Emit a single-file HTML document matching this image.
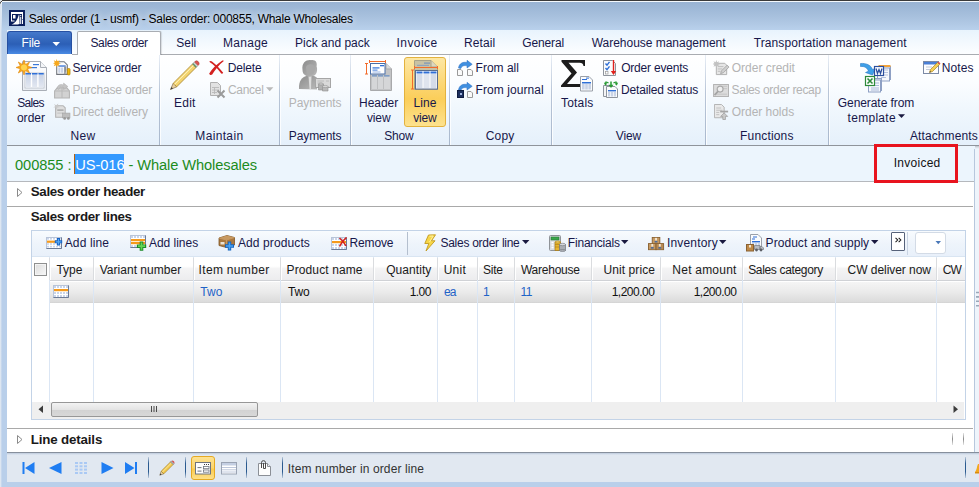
<!DOCTYPE html>
<html lang="en"><head><meta charset="utf-8"><title>Sales order</title>
<style>
html,body{margin:0;padding:0;background:#fff;}
body{width:979px;height:487px;overflow:hidden;font-family:"Liberation Sans",sans-serif;font-size:12px;}
#win{position:relative;width:979px;height:487px;overflow:hidden;background:#fff;}
#win div,#win span,#win svg{position:absolute;box-sizing:border-box;}
#win .t{white-space:nowrap;line-height:12px;font-size:12px;}
#win .t span.sel{position:static;background:#3399ff;color:#fff;padding:3px 0 1px 0;box-shadow:-1px 0 0 #b8620c;}
/* window chrome */
#frame{left:0;top:0;width:979px;height:487px;background:#b9cfea;}
#titlebar{left:0;top:0;width:979px;height:31px;background:linear-gradient(#97b1d1 0px,#9eb8d7 8px,#a7c0dd 16px,#b1c9e5 24px,#bad2ed 31px);}
#topline{left:0;top:0;width:979px;height:1px;background:#3a3a3a;}
#topline2{left:1px;top:1px;width:978px;height:1px;background:#f4f8fc;}
#leftline{left:0;top:1px;width:1px;height:486px;background:linear-gradient(#555 0,#555 2px,#dde6f1 3px,#dde6f1 100%);}
#leftline2{left:1px;top:2px;width:1px;height:485px;background:linear-gradient(#e8eff8,#c8d8ec 30px,#c6d7ed);}
#tabrow{left:7px;top:30px;width:972px;height:25px;background:linear-gradient(#e8f3fd 0,#f3f9fe 50%,#fdfeff 100%);}
#tabline{left:72px;top:54px;width:907px;height:1px;background:#a9acb1;}
#filebtn{left:7px;top:30px;width:65px;height:24px;background:transparent;border-radius:3px 3px 0 0;}
#filebtn i{position:absolute;left:0;top:1px;right:0;bottom:0;border-radius:3px 3px 0 0;background:linear-gradient(#4579cb 0,#3468bd 35%,#2c5fb6 55%,#3873cf 80%,#4a8be3 100%);border:1px solid #2650a2;border-bottom:none;}
#seltab{left:77px;top:31px;width:84px;height:24px;background:#fff;border:1px solid #a9adb3;border-bottom:none;border-radius:2px 2px 0 0;box-shadow:1px 0 1px rgba(0,0,0,.12);}
#ribbon{left:7px;top:55px;width:972px;height:90px;background:linear-gradient(#ffffff 0,#fbfdff 30%,#f0f7fd 60%,#e5f0fb 100%);}
#ribbonline{left:7px;top:145px;width:972px;height:1px;background:#8f949b;}
#ribbonshadow{left:7px;top:146px;width:972px;height:3px;background:linear-gradient(#bcc1c8,#dde3ea 55%,#ecf5fd);}
.gsep{top:55px;width:1px;height:90px;background:linear-gradient(#e8eef6,#b9c6d8 40%,#a9b8cd);}
.gsep2{top:55px;width:1px;height:90px;background:rgba(255,255,255,.8);}
#lineview{left:404px;top:57px;width:42px;height:70px;border:1px solid #e3b23e;border-radius:3px;background:linear-gradient(#fde7a4 0,#fcd878 35%,#fbce5a 60%,#fde28e 100%);}
/* caption */
#caption{left:7px;top:146px;width:968px;height:36px;background:#ecf5fd;}
#capline{left:7px;top:181px;width:968px;height:1px;background:#b5b8bd;}
#content{left:7px;top:182px;width:968px;height:270px;background:#fff;}
#rightstrip{left:974px;top:149px;width:5px;height:303px;background:#eef4fb;border-left:1px solid #b7c7dd;}
.hline{left:7px;width:966px;height:1px;background:#a9a9a9;}
#redbox{left:874px;top:144px;width:84px;height:39px;border:3px solid #e8131e;background:#ecf5fd;}
/* grid */
#gridbox{left:31px;top:230px;width:935px;height:190px;border:1px solid #c3d3e7;background:#fff;}
#toolbar{left:32px;top:231px;width:933px;height:26px;background:linear-gradient(#f8fbfe,#eef4fb 50%,#e8f0fa);}
#hdr{left:49px;top:257px;width:916px;height:24px;background:linear-gradient(#ffffff 0,#ffffff 40%,#f4f4f5 50%,#ececee 100%);border-bottom:1px solid #d0d2d6;}
#row1{left:49px;top:282px;width:916px;height:21px;background:linear-gradient(#f5f5f5 0,#eaeaea 50%,#dbdbdb 95%,#d0d0d0 100%);}
.csep{top:257px;width:1px;height:145px;background:#dbe6f4;}
.hsep{top:258px;width:2px;height:22px;background:linear-gradient(90deg,#dadcdf 50%,#fff 50%);}
#chk{left:34px;top:263px;width:13px;height:13px;border:1px solid #8e8f8f;background:linear-gradient(135deg,#dcdcdc,#f8f8f8);box-shadow:inset 0 0 0 1px #f4f4f4;}
#hscroll{left:32px;top:402px;width:932px;height:17px;background:#efefef;}
#thumb{left:51px;top:402px;width:207px;height:15px;border:1px solid #979797;border-radius:2px;background:linear-gradient(#f3f3f3 0,#e4e4e4 50%,#d2d2d2 51%,#d8d8d8 100%);}
/* status */
#statusline{left:7px;top:452px;width:972px;height:1px;background:#868f9c;}
#status{left:7px;top:453px;width:972px;height:29px;background:linear-gradient(#b9c6d9 0,#d3ddea 1px,#e1e8f1 2.5px,#e1e8f1 100%);}
#bottomband{left:2px;top:482px;width:977px;height:5px;background:#b9cfea;}
.ssep{top:457px;width:1px;height:21px;background:linear-gradient(rgba(40,80,130,.2),#2a5a90 30%,#2a5a90 70%,rgba(40,80,130,.2));}
#sbtn{left:191px;top:456px;width:24px;height:24px;border:1px solid #e5a922;border-radius:3px;background:linear-gradient(#fde293,#fcd56c 50%,#fbcb4f 55%,#fde08a);}

#tbline{left:32px;top:256px;width:933px;height:1px;background:#d9e5f2;}
#t0{text-shadow:0 0 6px rgba(255,255,255,.75),0 0 10px rgba(255,255,255,.5);}

</style></head>
<body>
<div id="win">
<div id="frame"></div>
<div id="titlebar"></div>
<div id="topline"></div><div id="topline2"></div>
<div id="leftline"></div><div id="leftline2"></div>
<div id="corner" style="left:0;top:0;width:2px;height:1px;background:#dfe3e8"></div><div style="left:0;top:1px;width:1px;height:1px;background:#cdd2d8"></div><div style="left:1px;top:1px;width:1px;height:1px;background:#4a4a4a"></div><div style="left:1px;top:2px;width:1px;height:2px;background:#f0f5fa"></div>
<svg id="ticon" style="left:9px;top:10px" width="16" height="16" viewBox="0 0 16 16"><rect width="16" height="16" fill="#0a1f5c"/><path d="M2 2 H14 V9 H13 V4 H3 V10.500 H5.500 V11.500 H2 Z" fill="#fff"/><rect x="4" y="5" width="2.500" height="3.500" fill="#fff"/><path d="M2.500 14.500 C6 13.500 8.500 10 9.800 4.800 L10.300 4.800 L10.600 14 L8.500 14.500 Z" fill="#fff"/><rect x="11.200" y="7" width="1" height="7" fill="#fff"/><rect x="11.200" y="5" width="1" height="1.200" fill="#fff"/><rect x="13" y="9.500" width="1" height="4.500" fill="#fff"/></svg>
<div id="tabrow"></div>
<div id="tabline"></div>
<div id="filebtn"><i></i></div>
<svg style="left:52px;top:42px" width="9" height="5" viewBox="0 0 9 5"><path d="M0.5 0 L8 0 L4.25 4 Z" fill="#fff"/></svg>
<div id="seltab"></div>
<div id="ribbon"></div>
<div id="ribbonline"></div>
<div id="ribbonshadow"></div>
<div class="gsep" style="left:159px"></div><div class="gsep2" style="left:160px"></div>
<div class="gsep" style="left:279px"></div><div class="gsep2" style="left:280px"></div>
<div class="gsep" style="left:350px"></div><div class="gsep2" style="left:351px"></div>
<div class="gsep" style="left:449px"></div><div class="gsep2" style="left:450px"></div>
<div class="gsep" style="left:551px"></div><div class="gsep2" style="left:552px"></div>
<div class="gsep" style="left:705px"></div><div class="gsep2" style="left:706px"></div>
<div class="gsep" style="left:828px"></div><div class="gsep2" style="left:829px"></div>
<div id="lineview"></div>
<div id="caption"></div>
<div id="capline"></div>
<div id="content"></div>
<div id="rightstrip"></div>
<div id="redbox"></div>
<svg style="left:17px;top:188px" width="6" height="9" viewBox="0 0 6 9"><path d="M0.5 0.5 L5 4.5 L0.5 8.5 Z" fill="#fff" stroke="#8a8a8a" stroke-width="1"/></svg>
<div class="hline" style="top:206px"></div>
<svg style="left:17px;top:435px" width="6" height="9" viewBox="0 0 6 9"><path d="M0.5 0.5 L5 4.5 L0.5 8.5 Z" fill="#fff" stroke="#8a8a8a" stroke-width="1"/></svg>
<div class="hline" style="top:428px"></div>
<div id="gridbox"></div>
<div id="toolbar"></div>
<div id="tbline"></div>
<div id="hdr"></div>
<div id="row1"></div>
<div id="chk"></div>
<div id="hscroll"></div>
<div id="thumb"></div>
<div class="csep" style="left:49px"></div><div class="hsep" style="left:49px"></div>
<div class="csep" style="left:93px"></div><div class="hsep" style="left:93px"></div>
<div class="csep" style="left:193px"></div><div class="hsep" style="left:193px"></div>
<div class="csep" style="left:280px"></div><div class="hsep" style="left:280px"></div>
<div class="csep" style="left:373px"></div><div class="hsep" style="left:373px"></div>
<div class="csep" style="left:437px"></div><div class="hsep" style="left:437px"></div>
<div class="csep" style="left:477px"></div><div class="hsep" style="left:477px"></div>
<div class="csep" style="left:514px"></div><div class="hsep" style="left:514px"></div>
<div class="csep" style="left:591px"></div><div class="hsep" style="left:591px"></div>
<div class="csep" style="left:660px"></div><div class="hsep" style="left:660px"></div>
<div class="csep" style="left:742px"></div><div class="hsep" style="left:742px"></div>
<div class="csep" style="left:835px"></div><div class="hsep" style="left:835px"></div>
<div class="csep" style="left:936px"></div><div class="hsep" style="left:936px"></div>

<div id="statusline"></div>
<div id="status"></div>
<div id="bottomband"></div>
<div id="sbtn"></div>
<div class="ssep" style="left:148px"></div>
<div class="ssep" style="left:185px"></div>
<div class="ssep" style="left:246px"></div>
<div class="ssep" style="left:282px"></div>
<div class="ssep" style="left:965px"></div>

<!-- icons -->
<!-- Sales order big icon -->
<svg style="left:15px;top:59px" width="34" height="33" viewBox="0 0 34 33">
<defs><linearGradient id="pg" x1="0" y1="0" x2="0" y2="1"><stop offset="0" stop-color="#ffffff"/><stop offset="1" stop-color="#e9edf3"/></linearGradient>
<linearGradient id="colg" x1="0" y1="0" x2="0" y2="1"><stop offset="0" stop-color="#c9d3e6"/><stop offset="1" stop-color="#e3e8f1"/></linearGradient></defs>
<path d="M7.5 2.5 H25.5 L31.5 8.5 V31.5 H7.5 Z" fill="url(#pg)" stroke="#a9aeb6" stroke-width="1"/>
<path d="M25.5 2.5 V8.5 H31.5" fill="#f3f5f8" stroke="#a9aeb6" stroke-width="1"/>
<rect x="18" y="5" width="6" height="1.2" fill="#3b78d8"/><rect x="15" y="8" width="7" height="1.2" fill="#3b78d8"/>
<rect x="10" y="14" width="19" height="15" fill="#fff" stroke="#b7bdc8" stroke-width="0.8"/>
<rect x="10.5" y="14" width="5.5" height="1.6" fill="#2f6fd6"/><rect x="17" y="14" width="5.5" height="1.6" fill="#2f6fd6"/><rect x="23.5" y="14" width="5.2" height="1.6" fill="#2f6fd6"/>
<rect x="10.8" y="16" width="5" height="12.5" fill="url(#colg)"/><rect x="17.2" y="16" width="5" height="12.5" fill="url(#colg)"/><rect x="23.6" y="16" width="5" height="12.5" fill="url(#colg)"/>
<path d="M9 1 L10.5 5.5 L14.5 3 L12.6 7 L17 8.5 L12.6 9.8 L14.5 14 L10.3 11.6 L9 16 L7.5 11.6 L3.3 14 L5.3 9.8 L1 8.5 L5.3 7 L3.3 3 L7.5 5.5 Z" fill="#f7a81b" stroke="#e38a0c" stroke-width="0.6"/>
<circle cx="9" cy="8.5" r="3" fill="#ffd34d"/>
</svg>
<!-- Service order -->
<svg style="left:53px;top:59px" width="18" height="17" viewBox="0 0 17 16">
<path d="M3.5 2.5 H10.5 L13.5 5.5 V14.5 H3.5 Z" fill="#fbfcfd" stroke="#6f747c"/>
<rect x="5" y="6" width="7" height="1.2" fill="#2f6fd6"/><rect x="5" y="8" width="2" height="5" fill="#c9d3e6"/><rect x="7.6" y="8" width="2" height="5" fill="#c9d3e6"/>
<path d="M3.5 0 L4.2 2.2 L6.3 1.2 L5.3 3.3 L7.5 4 L5.3 4.7 L6.3 6.8 L4.2 5.8 L3.5 8 L2.8 5.8 L0.7 6.8 L1.7 4.7 L0 4 L1.7 3.3 L0.7 1.2 L2.8 2.2 Z" fill="#f7a81b"/>
<path d="M10.5 7 L12.5 7 L12.5 10 L11.8 14.5 L10.6 14.5 L10.5 10 Z" fill="#8a8f98"/>
<rect x="13.5" y="9" width="2.6" height="6" rx="0.8" fill="#f2b705" stroke="#a67800" stroke-width="0.6"/>
</svg>
<!-- Purchase order (disabled) -->
<svg style="left:53px;top:82px" width="18" height="17" viewBox="0 0 17 16">
<path d="M1.5 8.5 L4 5.5 H13 L15.5 8.5 V15 H1.5 Z" fill="#d2d2d2" stroke="#b3b3b3"/>
<path d="M1.5 8.5 H15.5 M8.5 5.5 V15" stroke="#b9b9b9" fill="none"/>
<path d="M4 6 C4 2.5 8 1.5 10 3 L10 1 L14 4.2 L10 7 L10 5 C8 4 6 4.5 5.5 7 Z" fill="#c4c4c4" stroke="#adadad" stroke-width="0.5"/>
</svg>
<!-- Direct delivery (disabled) -->
<svg style="left:53px;top:103px" width="18" height="17" viewBox="0 0 17 16">
<path d="M2.5 2.5 H9.5 L11.5 4.5 V13.5 H2.5 Z" fill="#dedede" stroke="#b3b3b3"/>
<rect x="4" y="6" width="6" height="1.4" fill="#a9a9a9"/><rect x="4" y="9" width="6" height="1" fill="#c3c3c3"/>
<path d="M1 1 L3 2 L5 0.5 L4.5 3 L6.5 4 L4.2 4.3 L3.5 6.5 L2.6 4.3 L0.3 4 L2.2 3 Z" fill="#c9c9c9"/>
<rect x="9" y="9.5" width="7" height="4.5" fill="#bdbdbd" stroke="#a4a4a4" stroke-width="0.6"/>
<circle cx="11" cy="14.5" r="1.3" fill="#9a9a9a"/><circle cx="14.5" cy="14.5" r="1.3" fill="#9a9a9a"/>
</svg>
<!-- Edit pencil -->
<svg style="left:169px;top:59px" width="32" height="32" viewBox="0 0 32 32">
<defs><linearGradient id="pen" x1="0" y1="0" x2="1" y2="1"><stop offset="0" stop-color="#fdf0bd"/><stop offset="0.5" stop-color="#f4d672"/><stop offset="1" stop-color="#d8a83a"/></linearGradient></defs>
<path d="M1.500 30.500 L4.200 24.300 L7.700 27.800 Z" fill="#e8cfa0" stroke="#8b7a55" stroke-width="0.800"/>
<path d="M1.500 30.500 L2.500 28 L4 29.500 Z" fill="#3a3a3a"/>
<path d="M4.200 24.300 L23.500 5 L27 8.500 L7.700 27.800 Z" fill="url(#pen)" stroke="#a8842c" stroke-width="0.800"/>
<path d="M5.600 25.400 L24.700 6.300" stroke="#fdf0b8" stroke-width="1" fill="none"/>
<path d="M23.500 5 L25 3.500 L28.500 7 L27 8.500 Z" fill="#4f9a5c" stroke="#6b6b6b" stroke-width="0.500"/>
<path d="M24.300 4.200 L25.500 3 L29 6.500 L27.800 7.700 Z" fill="#cfd3d6"/>
<path d="M25.500 3 L26.500 2 Q27.800 1.200 29.200 2.600 Q30.700 4.100 30 5.400 L29 6.500 Z" fill="#d9534f" stroke="#9c3a37" stroke-width="0.500"/>
</svg>
<!-- Delete X -->
<svg style="left:208px;top:60px" width="17" height="16" viewBox="0 0 17 16">
<path d="M1.200 1.800 C2.200 0.600 3.200 0.800 4 1.500 C8 4.500 12 8.500 15.200 12.800 C14.800 13.600 14 14 13.200 13.600 C10.500 9.500 6 5 1.200 1.800 Z" fill="#d3201f"/>
<path d="M15.800 1 C15.200 0.300 14.500 0.400 14 0.800 C9 4 4 9 1.200 13.500 C1.500 15 3 15.400 4.200 14.600 C7 9.500 11 5 15.800 1 Z" fill="#d3201f"/>
</svg>
<!-- Cancel (disabled) -->
<svg style="left:209px;top:82px" width="17" height="17" viewBox="0 0 17 17">
<path d="M1.5 0.5 H8.5 L11.5 3.5 V13.5 H1.5 Z" fill="#e2e2e2" stroke="#b0b0b0"/>
<path d="M3 5.5 H10 M3 8 H10 M3 10.5 H8 M5.5 5.5 V12" stroke="#b9b9b9" stroke-width="0.9" fill="none"/>
<path d="M8.5 8.5 L15.5 15.5 M15.5 8.5 L8.5 15.5" stroke="#9b9b9b" stroke-width="2" fill="none"/>
</svg>
<svg style="left:266px;top:87px" width="8" height="5" viewBox="0 0 8 5"><path d="M0 0.3 H7.4 L3.7 4.2 Z" fill="#b9b9b9"/></svg>
<!-- Payments (disabled) -->
<svg style="left:298px;top:59px" width="34" height="33" viewBox="0 0 34 33">
<defs><linearGradient id="pers" x1="0" y1="0" x2="1" y2="1"><stop offset="0" stop-color="#8c8c8c"/><stop offset="1" stop-color="#b9b9b9"/></linearGradient></defs>
<path d="M1 30 C0.5 22 4 18 9.5 16.5 L14.5 16.5 C17 17.2 18.5 18 19 19 V30.5 Z" fill="url(#pers)"/>
<path d="M10.5 17 L13.5 17 L13 30 L11.5 30 Z" fill="#dcdcdc"/>
<path d="M4.5 11 C3.5 3 9 0.5 13 1.2 C17.5 0.5 19.5 3.5 18.6 7.5 C19.6 10 19 14 17.5 15.5 C15 18 9.5 18.5 7 16 C5.5 15.5 4.5 13.5 4.5 11 Z" fill="url(#pers)"/>
<path d="M8 8 C9 5 13 4.5 15.5 6 C17 8 17 12 15.5 14.5 C13.5 16.5 10 16.3 8.6 14 Z" fill="#a9a9a9"/>
<rect x="17.5" y="19.5" width="15" height="9" fill="#d9d9d9" stroke="#a6a6a6"/>
<path d="M19.5 22 H26 M19.5 24 H24 M28 22 H31" stroke="#b5b5b5" stroke-width="0.8"/>
<path d="M20.5 25 h5 v6 h-5 z" fill="#b1b1b1" stroke="#8f8f8f" stroke-width="0.6"/>
<ellipse cx="23" cy="25" rx="2.5" ry="1" fill="#cdcdcd" stroke="#8f8f8f" stroke-width="0.5"/>
<path d="M24.5 27.5 h5.5 v4.5 h-5.5 z" fill="#b9b9b9" stroke="#8f8f8f" stroke-width="0.6"/>
<ellipse cx="27.25" cy="27.5" rx="2.75" ry="1.1" fill="#d6d6d6" stroke="#8f8f8f" stroke-width="0.5"/>
</svg>
<!-- Header view -->
<svg style="left:364px;top:59px" width="30" height="33" viewBox="0 0 30 33">
<path d="M6.5 4.5 H22 L27.5 10 V31.5 H6.5 Z" fill="#c3c4c6" stroke="#a8a9ab"/>
<path d="M22 4.500 V10 H27.5" fill="#d9dadb" stroke="#a8a9ab"/>
<rect x="8" y="17.5" width="18" height="12.500" fill="#d5d6d8"/>
<rect x="8" y="16" width="5" height="1.6" fill="#7f9dc6"/><rect x="14" y="16" width="5" height="1.600" fill="#7f9dc6"/><rect x="20" y="16" width="5.500" height="1.600" fill="#7f9dc6"/>
<path d="M13.500 17.500 V30 M19.500 17.500 V30" stroke="#bebfc1" stroke-width="1"/>
<rect x="6.500" y="4.500" width="14.500" height="10.500" fill="#fff" stroke="#4a6fa8"/>
<rect x="16" y="6" width="4" height="1.300" fill="#2f6fd6"/><rect x="8.500" y="8.300" width="7" height="1.200" fill="#2f6fd6"/><rect x="8.500" y="10.500" width="5" height="1.200" fill="#5d8fe0"/><rect x="8.500" y="12.500" width="8" height="1" fill="#9ab6e6"/>
<path d="M5.500 2.500 H21.500 M5.500 1 V4 M21.500 1 V4" stroke="#f26b2b" stroke-width="1" fill="none"/>
<path d="M2.500 4.500 V15 M1 4.500 H4 M1 15 H4" stroke="#f26b2b" stroke-width="1" fill="none"/>
</svg>
<!-- Line view -->
<svg style="left:410px;top:59px" width="30" height="33" viewBox="0 0 30 33">
<path d="M4.500 1.500 H21 L27.500 8 V30.500 H4.500 Z" fill="#c9c2a4" stroke="#aaa388"/>
<path d="M21 1.500 V8 H27.500" fill="#ddd7bd" stroke="#aaa388"/>
<rect x="14" y="3.500" width="6" height="1.200" fill="#7a94b8"/><rect x="7" y="5.800" width="12" height="1.200" fill="#8fa3bf"/>
<rect x="5.500" y="11.500" width="22" height="18.500" fill="#fff" stroke="#5a6d8c"/>
<rect x="6.500" y="12.500" width="6" height="2" fill="#2f6fd6"/><rect x="13.500" y="12.500" width="6" height="2" fill="#2f6fd6"/><rect x="20.500" y="12.500" width="6" height="2" fill="#2f6fd6"/>
<rect x="6.500" y="15" width="6" height="14" fill="#d4dbe8"/><rect x="13.500" y="15" width="6" height="14" fill="#dfe4ee"/><rect x="20.500" y="15" width="6" height="14" fill="#d4dbe8"/>
<path d="M4.500 8.500 H27.500 M4.500 7 V10 M27.500 7 V10" stroke="#f26b2b" stroke-width="1" fill="none"/>
<path d="M2.500 11 V30 M1 11 H4 M1 30 H4" stroke="#f26b2b" stroke-width="1" fill="none"/>
</svg>
<!-- From all -->
<svg style="left:457px;top:60px" width="17" height="16" viewBox="0 0 17 16">
<path d="M1.500 8 C2 3.500 6 1.500 10 2.500 L10 0.300 L15.200 4.300 L10 8 L10 5.800 C7 5 4.500 6 3.800 8.500 Z" fill="#3f8fe0" stroke="#2a6cc0" stroke-width="0.5"/>
<path d="M0.500 9.500 H4 L5.500 11 V15.500 H0.500 Z" fill="#fafafa" stroke="#9a9a9a"/>
<path d="M10.500 9.500 H14 L15.500 11 V15.500 H10.500 Z" fill="#fafafa" stroke="#9a9a9a"/>
</svg>
<!-- From journal -->
<svg style="left:457px;top:82px" width="17" height="16" viewBox="0 0 17 16">
<path d="M1.500 8 C2 3.500 6 1.500 10 2.500 L10 0.300 L15.200 4.300 L10 8 L10 5.800 C7 5 4.500 6 3.800 8.500 Z" fill="#3f8fe0" stroke="#2a6cc0" stroke-width="0.5"/>
<rect x="0.500" y="8.500" width="6" height="7" fill="#1d2f5e" stroke="#0f1c40"/>
<rect x="3" y="11" width="2" height="2" fill="#9fb3dd"/>
<path d="M10.500 9.500 H14 L15.500 11 V15.500 H10.500 Z" fill="#fafafa" stroke="#9a9a9a"/>
</svg>
<!-- Totals sigma -->
<svg style="left:560px;top:59px" width="34" height="33" viewBox="0 0 34 33">
<path d="M1.500 1 H25 V7 H23.500 C23.200 4.500 22 3.800 19.500 3.800 H8.500 L17 13.500 L7 25 H20 C23 25 24.300 24 25 21 H26.500 L25.500 28 H1 V26.500 L11.500 14.500 L1.500 2.800 Z" fill="#1c1c1c"/>
<path d="M20.500 17.500 H29 L32.500 21 V32 H20.500 Z" fill="#fbfcfd" stroke="#9aa0a9"/>
<rect x="22" y="20" width="5" height="1" fill="#2f6fd6"/><rect x="26" y="18.600" width="3" height="1" fill="#2f6fd6"/>
<rect x="22" y="23" width="9" height="1.500" fill="#2f6fd6"/>
<rect x="22" y="25" width="2.600" height="5.500" fill="#c9d3e6"/><rect x="25.200" y="25" width="2.600" height="5.500" fill="#c9d3e6"/><rect x="28.400" y="25" width="2.600" height="5.500" fill="#c9d3e6"/>
</svg>
<!-- Order events -->
<svg style="left:603px;top:60px" width="17" height="16" viewBox="0 0 17 16">
<path d="M0.500 0.500 H9.500 L12.500 3.500 V15.500 H0.500 Z" fill="#fbfcfd" stroke="#8e949d"/>
<path d="M2.500 3.500 L4 5.200 L6.500 1.800 M2.500 8 L4 9.700 L6.500 6.300" stroke="#2f6fd6" stroke-width="1.400" fill="none"/>
<rect x="2.500" y="11.500" width="2.500" height="2.500" fill="#fff" stroke="#9a9a9a" stroke-width="0.700"/>
<path d="M10.500 0 V12.500" stroke="#e0201c" stroke-width="1.400"/><path d="M7.800 11 H13.200 L10.500 15 Z" fill="#e0201c"/>
</svg>
<!-- Detailed status -->
<svg style="left:602px;top:81px" width="18" height="17" viewBox="0 0 18 17">
<path d="M1.500 4.500 H10 V15.500 H1.500 Z" fill="#f3f4f6" stroke="#8e949d"/>
<path d="M4.500 5.500 H13 L15.500 8 V16.500 H4.500 Z" fill="#fbfcfd" stroke="#8e949d"/>
<rect x="6" y="9" width="8" height="1.400" fill="#2f6fd6"/>
<rect x="6" y="11" width="2.200" height="4.500" fill="#c9d3e6"/><rect x="8.900" y="11" width="2.200" height="4.500" fill="#c9d3e6"/><rect x="11.800" y="11" width="2.200" height="4.500" fill="#c9d3e6"/>
<path d="M9 0.500 V5" stroke="#2a9a35" stroke-width="1.500"/><path d="M6.500 3.800 H11.500 L9 7 Z" fill="#2a9a35"/>
<path d="M3 3.500 L4 1 L6.500 1.800 M15 3.500 L14 1 L11.500 1.800" stroke="#2a9a35" stroke-width="1.300" fill="none"/>
<path d="M1.800 1.500 L3.600 4.800 L5.200 2.600 Z M16.200 1.500 L14.400 4.800 L12.800 2.600 Z" fill="#2a9a35"/>
</svg>
<!-- Order credit (disabled) -->
<svg style="left:713px;top:60px" width="17" height="16" viewBox="0 0 18 17">
<path d="M3.500 3.500 H12.500 L14.500 5.500 V15.500 H3.500 Z" fill="#e6e6e6" stroke="#aeaeae"/>
<path d="M5 7 H11 M5 9.500 H10 M5 12 H8" stroke="#bcbcbc"/>
<path d="M3.500 0 L4.300 2.300 L6.500 1.300 L5.500 3.500 L7.800 4.300 L5.500 5 L6.500 7.200 L4.300 6.200 L3.500 8.500 L2.700 6.200 L0.500 7.200 L1.500 5 L-0.500 4.300 L1.500 3.500 L0.500 1.300 L2.700 2.300 Z" fill="#c2c2c2"/>
<path d="M8 14.500 L9 11.500 L15 5.500 L17 7.500 L11 13.500 Z" fill="#cfcfcf" stroke="#9f9f9f" stroke-width="0.800"/>
</svg>
<!-- Sales order recap (disabled) -->
<svg style="left:713px;top:84px" width="17" height="13" viewBox="0 0 18 14">
<rect x="0.500" y="0.500" width="16" height="13" fill="#dcdcdc" stroke="#b0b0b0"/>
<path d="M10 2.500 H15 M10 5 H15 M2 11 H15" stroke="#c4c4c4"/>
<circle cx="7.500" cy="5.500" r="3.200" fill="#efefef" stroke="#a9a9a9" stroke-width="1.200"/>
<path d="M5.200 8 L1.500 12" stroke="#a4a4a4" stroke-width="1.800"/>
</svg>
<!-- Order holds (disabled) -->
<svg style="left:714px;top:104px" width="15" height="16" viewBox="0 0 17 18">
<path d="M0.500 0.500 H8.500 L11.500 3.500 V15.500 H0.500 Z" fill="#e9e9e9" stroke="#adadad"/>
<path d="M2.500 4.500 H8 M2.500 7 H9.500 M2.500 9.500 H6 M2.500 12 H6" stroke="#bdbdbd"/>
<rect x="7" y="7.500" width="9" height="2" fill="#a5a5a5"/>
<path d="M11.500 10 L15.500 14 H13 V17.500 H10 V14 H7.500 Z" fill="#c9c9c9" stroke="#9a9a9a" stroke-width="0.800"/>
</svg>
<!-- Generate from template -->
<svg style="left:859px;top:61px" width="34" height="32" viewBox="0 0 34 32">
<path d="M1.500 2.500 C7 2 12 4 13.500 8.500 L16.500 7.500 L13.500 14 L6.500 11.500 L9.500 10.200 C8.500 7 5.500 5 1.500 5.500 Z" fill="#3fa0e8" stroke="#2a78c4" stroke-width="0.600"/>
<rect x="19.500" y="5.500" width="12" height="13" fill="#e8ecf5" stroke="#8ea0c4"/><rect x="19.500" y="4" width="12" height="2" fill="#f2a23a"/>
<rect x="18.500" y="7" width="12" height="13" fill="#f6f8fc" stroke="#8ea0c4"/>
<path d="M22 9 H29 M22 11.500 H29 M22 14 H29 M22 16.500 H27" stroke="#b6c3de"/>
<rect x="15.500" y="5.500" width="9" height="9" fill="#fff" stroke="#2b4f9e" stroke-width="1.200"/>
<path d="M17 7.500 L18.500 12.500 L20 8.500 L21.500 12.500 L23 7.500" stroke="#2b4f9e" stroke-width="1.300" fill="none"/>
<rect x="10.500" y="17.500" width="12" height="12" fill="#e8ecf5" stroke="#8ea0c4"/>
<rect x="9.500" y="19" width="12" height="12" fill="#f6f8fc" stroke="#8ea0c4"/>
<path d="M15 22 H20 M15 24.500 H20 M12 27 H20 M12 29 H20" stroke="#a9b9da"/>
<rect x="6.500" y="15.500" width="9" height="9" fill="#fff" stroke="#2d8a3a" stroke-width="1.200"/>
<path d="M8.500 17.500 L13.500 22.500 M13.500 17.500 L8.500 22.500" stroke="#2d8a3a" stroke-width="1.600"/>
</svg>
<svg style="left:898px;top:114px" width="8" height="5" viewBox="0 0 8 5"><path d="M0 0.300 H7 L3.500 4 Z" fill="#1a1a40"/></svg>
<!-- Notes -->
<svg style="left:923px;top:60px" width="18" height="15" viewBox="0 0 18 15">
<rect x="0.500" y="1.500" width="15" height="12" fill="#fdfdfe" stroke="#7c8aa5"/>
<rect x="1" y="2" width="14" height="2.500" fill="#4a7fd6"/>
<path d="M3 7 H9 M3 9.500 H7" stroke="#c3cad8"/>
<path d="M6.500 12.500 L7.500 9.500 L14.500 2.500 L16.500 4.500 L9.500 11.500 Z" fill="#f5cf55" stroke="#a8842c" stroke-width="0.700"/>
<path d="M6.500 12.500 L7 11 L8 12 Z" fill="#333"/>
<path d="M14.500 2.500 L15.500 1.500 L17.500 3.500 L16.500 4.500 Z" fill="#d9534f"/>
</svg>
<!-- TOOLBAR ICONS -->
<!-- Add line -->
<svg style="left:46px;top:237px" width="17" height="13" viewBox="0 0 17 13">
<rect x="0" y="0" width="16" height="12" fill="#fff"/>
<rect x="0.500" y="0.500" width="15" height="11" fill="none" stroke="#b8c4d8"/>
<path d="M0.500 11.500 H15.500 V0.500" fill="none" stroke="#6c7b96"/>
<rect x="1.0" y="1.0" width="2" height="1.6" fill="#c9d5ea"/><rect x="4.0" y="1.0" width="2" height="1.6" fill="#c9d5ea"/><rect x="7.0" y="1.0" width="2" height="1.6" fill="#c9d5ea"/><rect x="10.0" y="1.0" width="2" height="1.6" fill="#c9d5ea"/><rect x="13.0" y="1.0" width="2" height="1.6" fill="#c9d5ea"/><rect x="1.0" y="6.2" width="2" height="1.6" fill="#c9d5ea"/><rect x="4.0" y="6.2" width="2" height="1.6" fill="#c9d5ea"/><rect x="7.0" y="6.2" width="2" height="1.6" fill="#c9d5ea"/><rect x="10.0" y="6.2" width="2" height="1.6" fill="#c9d5ea"/><rect x="13.0" y="6.2" width="2" height="1.6" fill="#c9d5ea"/><rect x="1.0" y="8.8" width="2" height="1.6" fill="#c9d5ea"/><rect x="4.0" y="8.8" width="2" height="1.6" fill="#c9d5ea"/><rect x="7.0" y="8.8" width="2" height="1.6" fill="#c9d5ea"/><rect x="10.0" y="8.8" width="2" height="1.6" fill="#c9d5ea"/><rect x="13.0" y="8.8" width="2" height="1.6" fill="#c9d5ea"/>
<rect x="1" y="3.600" width="10" height="2.200" fill="#f59a1b"/>
<path d="M12.500 1 V8.500 M8.800 4.800 H16.200" stroke="#1762c4" stroke-width="3"/>
<path d="M12.500 2 V7.500 M9.800 4.800 H15.200" stroke="#56a9f2" stroke-width="1.200"/>
</svg>
<!-- Add lines -->
<svg style="left:130px;top:235px" width="17" height="17" viewBox="0 0 17 17">
<rect x="0" y="0" width="16" height="13" fill="#fff"/>
<rect x="0.500" y="0.500" width="15" height="12" fill="none" stroke="#b8c4d8"/>
<path d="M0.500 12.500 H15.500 V0.500" fill="none" stroke="#6c7b96"/>
<rect x="1.0" y="1.0" width="2" height="2" fill="#c9d5ea"/><rect x="4.0" y="1.0" width="2" height="2" fill="#c9d5ea"/><rect x="7.0" y="1.0" width="2" height="2" fill="#c9d5ea"/><rect x="10.0" y="1.0" width="2" height="2" fill="#c9d5ea"/><rect x="13.0" y="1.0" width="2" height="2" fill="#c9d5ea"/><rect x="1.0" y="10.0" width="2" height="2" fill="#c9d5ea"/><rect x="4.0" y="10.0" width="2" height="2" fill="#c9d5ea"/><rect x="7.0" y="10.0" width="2" height="2" fill="#c9d5ea"/><rect x="10.0" y="10.0" width="2" height="2" fill="#c9d5ea"/><rect x="13.0" y="10.0" width="2" height="2" fill="#c9d5ea"/>
<rect x="1" y="4" width="14" height="2.200" fill="#f59a1b"/><rect x="1" y="7" width="14" height="2.200" fill="#f59a1b"/>
<path d="M11.500 6.500 V15.800 M6.800 11.200 H16.200" stroke="#1c8a28" stroke-width="3.600"/>
<path d="M11.500 7.600 V14.700 M8 11.200 H15" stroke="#63d653" stroke-width="1.700"/>
</svg>
<!-- Add products -->
<svg style="left:218px;top:235px" width="18" height="17" viewBox="0 0 18 17">
<path d="M1 3 L9 0.500 L16.500 2.500 V10 L8.500 12.500 L1 10.500 Z" fill="#a9783f" stroke="#7d5527" stroke-width="0.800"/>
<path d="M1 3 L8.500 5 L16.500 2.500 M8.500 5 V12.500" stroke="#c99b63" stroke-width="0.900" fill="none"/>
<path d="M1 3 L9 0.500 L16.500 2.500 L8.500 5 Z" fill="#c89a62"/>
<rect x="2.500" y="7" width="4" height="2.500" fill="#e9e2d6"/>
<path d="M11.500 6.500 V15.500 M7 11 H16" stroke="#1565c0" stroke-width="3.400"/>
<path d="M11.500 7.500 V14.500 M8 11 H15" stroke="#4aa3f2" stroke-width="1.600"/>
</svg>
<!-- Remove -->
<svg style="left:331px;top:237px" width="17" height="14" viewBox="0 0 17 14">
<rect x="0" y="0" width="16" height="13" fill="#fff"/>
<rect x="0.500" y="0.500" width="15" height="12" fill="none" stroke="#b8c4d8"/>
<path d="M0.500 12.500 H15.500 V0.500" fill="none" stroke="#6c7b96"/>
<rect x="1.0" y="1.0" width="2" height="2" fill="#c9d5ea"/><rect x="4.0" y="1.0" width="2" height="2" fill="#c9d5ea"/><rect x="7.0" y="1.0" width="2" height="2" fill="#c9d5ea"/><rect x="10.0" y="1.0" width="2" height="2" fill="#c9d5ea"/><rect x="13.0" y="1.0" width="2" height="2" fill="#c9d5ea"/><rect x="1.0" y="7.0" width="2" height="2" fill="#c9d5ea"/><rect x="4.0" y="7.0" width="2" height="2" fill="#c9d5ea"/><rect x="7.0" y="7.0" width="2" height="2" fill="#c9d5ea"/><rect x="10.0" y="7.0" width="2" height="2" fill="#c9d5ea"/><rect x="13.0" y="7.0" width="2" height="2" fill="#c9d5ea"/><rect x="1.0" y="10.0" width="2" height="2" fill="#c9d5ea"/><rect x="4.0" y="10.0" width="2" height="2" fill="#c9d5ea"/><rect x="7.0" y="10.0" width="2" height="2" fill="#c9d5ea"/><rect x="10.0" y="10.0" width="2" height="2" fill="#c9d5ea"/><rect x="13.0" y="10.0" width="2" height="2" fill="#c9d5ea"/>
<rect x="1" y="4" width="14" height="2.200" fill="#f59a1b"/>
<path d="M8.500 1 C11 3 13.500 6 15 9 M15.500 0.500 C12.500 3 10 6 8.500 9.500" stroke="#d3201f" stroke-width="1.600" fill="none"/>
</svg>
<!-- Lightning -->
<svg style="left:423px;top:234px" width="14" height="18" viewBox="0 0 14 18">
<path d="M5.500 1 L12.500 0.800 L8.500 6.800 L12 6.800 L3 17 L5.800 9.500 L1.800 9.500 Z" fill="#f7d648" stroke="#c29a1e" stroke-width="0.900" stroke-linejoin="round"/>
<path d="M6.500 2.200 L10.200 2 L6.500 8" stroke="#fdf1a6" stroke-width="1" fill="none"/>
</svg>
<!-- Financials -->
<svg style="left:549px;top:234px" width="18" height="18" viewBox="0 0 18 18">
<rect x="0.500" y="1.500" width="11" height="15" rx="1" fill="#d9dbde" stroke="#8f9398"/>
<rect x="2" y="3" width="8" height="3" fill="#3aa64a" stroke="#257a33" stroke-width="0.600"/>
<path d="M2.500 8.500 H4.500 M6 8.500 H8 M2.500 11 H4.500 M6 11 H8 M2.500 13.500 H4.500 M6 13.500 H8" stroke="#fff" stroke-width="1.600"/>
<path d="M6 8 h5.500 v8.500 h-5.500 z" fill="#e7b52f" stroke="#a87a12" stroke-width="0.700"/>
<path d="M6 10.500 h5.500 M6 13 h5.500" stroke="#a87a12" stroke-width="0.600"/>
<ellipse cx="8.750" cy="8" rx="2.750" ry="1" fill="#f7d66a" stroke="#a87a12" stroke-width="0.600"/>
<path d="M10.500 10.500 h6 v6 h-6 z" fill="#a9adb3" stroke="#6f747b" stroke-width="0.700"/>
<ellipse cx="13.500" cy="10.500" rx="3" ry="1.200" fill="#d5d8dc" stroke="#6f747b" stroke-width="0.600"/>
<ellipse cx="13.500" cy="16.500" rx="3" ry="1" fill="#a9adb3" stroke="#6f747b" stroke-width="0.600"/>
</svg>
<!-- Inventory -->
<svg style="left:648px;top:237px" width="17" height="14" viewBox="0 0 18 16" preserveAspectRatio="none">
<rect x="4.500" y="0.500" width="8" height="7" fill="#c79a62" stroke="#8a6233"/>
<rect x="0.500" y="7.500" width="8" height="7" fill="#c79a62" stroke="#8a6233"/>
<rect x="8.500" y="7.500" width="8" height="7" fill="#b98a52" stroke="#8a6233"/>
<rect x="7.500" y="1" width="2" height="3" fill="#f1e6d3"/><rect x="3.500" y="8" width="2" height="3" fill="#f1e6d3"/><rect x="11.500" y="8" width="2" height="3" fill="#f1e6d3"/>
<rect x="7" y="4.500" width="3" height="1.800" fill="#4e6b9a"/><rect x="3" y="11.500" width="3" height="1.800" fill="#4e6b9a"/><rect x="11" y="11.500" width="3" height="1.800" fill="#4e6b9a"/>
</svg>
<!-- Product and supply -->
<svg style="left:746px;top:234px" width="18" height="18" viewBox="0 0 18 18">
<path d="M4.500 0.500 H12 L15.500 4 V14.500 H4.500 Z" fill="#fbfcfd" stroke="#9aa0a9"/>
<path d="M7 3 H11 M6 5 H9" stroke="#2f6fd6" stroke-width="1"/>
<rect x="6" y="7" width="8" height="1.400" fill="#2f6fd6"/><rect x="6" y="9" width="2.200" height="4" fill="#c9d3e6"/><rect x="8.900" y="9" width="2.200" height="4" fill="#c9d3e6"/><rect x="11.800" y="9" width="2.200" height="4" fill="#c9d3e6"/>
<rect x="0.500" y="10.500" width="7" height="6.500" fill="#c08a48" stroke="#8a6233"/>
<rect x="3" y="11" width="2" height="2.500" fill="#f1e6d3"/>
<path d="M8.500 11.500 H14 V15.500 H8.500 Z M14 12.500 H16 L17.500 14 V15.500 H14 Z" fill="#b9bcc2" stroke="#767b83" stroke-width="0.700"/>
<circle cx="10.500" cy="16" r="1.400" fill="#5c5f66"/><circle cx="15" cy="16" r="1.400" fill="#5c5f66"/>
</svg>
<svg style="left:522px;top:240px" width="8" height="5" viewBox="0 0 8 5"><path d="M0 0 H7.400 L3.700 4 Z" fill="#1a1a40"/></svg>
<svg style="left:621px;top:240px" width="8" height="5" viewBox="0 0 8 5"><path d="M0 0 H7.400 L3.700 4 Z" fill="#1a1a40"/></svg>
<svg style="left:719px;top:240px" width="8" height="5" viewBox="0 0 8 5"><path d="M0 0 H7.400 L3.700 4 Z" fill="#1a1a40"/></svg>
<svg style="left:871px;top:240px" width="8" height="5" viewBox="0 0 8 5"><path d="M0 0 H7.400 L3.700 4 Z" fill="#1a1a40"/></svg>
<!-- row type icon -->
<svg style="left:53px;top:285px" width="17" height="13" viewBox="0 0 17 13">
<rect x="0" y="0" width="16" height="13" fill="#fff"/>
<rect x="0.5" y="0.5" width="15" height="12" fill="none" stroke="#b8c4d8"/>
<path d="M0.500 12.500 H15.500 V0.500" fill="none" stroke="#6c7b96"/>
<rect x="1.0" y="1.0" width="2" height="2" fill="#c9d5ea"/><rect x="4.0" y="1.0" width="2" height="2" fill="#c9d5ea"/><rect x="7.0" y="1.0" width="2" height="2" fill="#c9d5ea"/><rect x="10.0" y="1.0" width="2" height="2" fill="#c9d5ea"/><rect x="13.0" y="1.0" width="2" height="2" fill="#c9d5ea"/><rect x="1.0" y="7.0" width="2" height="2" fill="#c9d5ea"/><rect x="4.0" y="7.0" width="2" height="2" fill="#c9d5ea"/><rect x="7.0" y="7.0" width="2" height="2" fill="#c9d5ea"/><rect x="10.0" y="7.0" width="2" height="2" fill="#c9d5ea"/><rect x="13.0" y="7.0" width="2" height="2" fill="#c9d5ea"/><rect x="1.0" y="10.0" width="2" height="2" fill="#c9d5ea"/><rect x="4.0" y="10.0" width="2" height="2" fill="#c9d5ea"/><rect x="7.0" y="10.0" width="2" height="2" fill="#c9d5ea"/><rect x="10.0" y="10.0" width="2" height="2" fill="#c9d5ea"/><rect x="13.0" y="10.0" width="2" height="2" fill="#c9d5ea"/>
<rect x="1" y="4" width="14" height="2.200" fill="#f59a1b"/>
</svg>
<!-- STATUS BAR ICONS -->
<svg style="left:22px;top:462px" width="13" height="12" viewBox="0 0 13 12"><path d="M0.500 0 H2.500 V12 H0.500 Z M12.500 0 V12 L3 6 Z" fill="#1f7df2"/></svg>
<svg style="left:49px;top:462px" width="13" height="12" viewBox="0 0 13 12"><path d="M12.500 0 V12 L0 6 Z" fill="#1f7df2"/></svg>
<svg style="left:75px;top:462px" width="12" height="12" viewBox="0 0 12 12"><g fill="#aac9f4"><rect x="0" y="0" width="3" height="2"/><rect x="4.500" y="0" width="3" height="2"/><rect x="9" y="0" width="3" height="2"/><rect x="0" y="3.300" width="3" height="2"/><rect x="4.500" y="3.300" width="3" height="2"/><rect x="9" y="3.300" width="3" height="2"/><rect x="0" y="6.600" width="3" height="2"/><rect x="4.500" y="6.600" width="3" height="2"/><rect x="9" y="6.600" width="3" height="2"/><rect x="0" y="10" width="3" height="2"/><rect x="4.500" y="10" width="3" height="2"/><rect x="9" y="10" width="3" height="2"/></g></svg>
<svg style="left:101px;top:462px" width="13" height="12" viewBox="0 0 13 12"><path d="M0.500 0 V12 L12.500 6 Z" fill="#1f7df2"/></svg>
<svg style="left:125px;top:462px" width="13" height="12" viewBox="0 0 13 12"><path d="M10 0 H12 V12 H10 Z M0 0 V12 L9.500 6 Z" fill="#1f7df2"/></svg>
<!-- pencil small -->
<svg style="left:159px;top:460px" width="16" height="16" viewBox="0 0 16 16">
<path d="M0.800 15.200 L2.200 11.200 L4.800 13.800 Z" fill="#e8cfa0" stroke="#7a6a48" stroke-width="0.600"/>
<path d="M0.800 15.200 L1.400 13.500 L2.500 14.600 Z" fill="#333"/>
<path d="M2.200 11.200 L11.500 1.900 L14.100 4.500 L4.800 13.800 Z" fill="#f3c94b" stroke="#a8842c" stroke-width="0.700"/>
<path d="M3.300 12.100 L12.400 3" stroke="#fdf0b8" stroke-width="0.800"/>
<path d="M11.500 1.900 L12.500 0.900 L15.100 3.500 L14.100 4.500 Z" fill="#b9bdc2" stroke="#6b6b6b" stroke-width="0.500"/>
<path d="M12.500 0.900 Q13.500 -0.100 14.700 1.100 Q16 2.400 15.100 3.500 Z" fill="#d9534f"/>
</svg>
<!-- form view icon (in highlighted btn) -->
<svg style="left:195px;top:462px" width="17" height="13" viewBox="0 0 17 13">
<rect x="0.500" y="0.500" width="15" height="11.500" fill="#fdfdfd" stroke="#6f747d"/>
<path d="M9 2.500 H14" stroke="#3a3a3a" stroke-width="1" stroke-dasharray="1 1"/>
<rect x="8.500" y="4.500" width="5.500" height="2.200" fill="#fff" stroke="#6f747d" stroke-width="0.800"/>
<rect x="8.500" y="8" width="5.500" height="2.200" fill="#fff" stroke="#6f747d" stroke-width="0.800"/>
<path d="M2.500 5.600 H6.500 M2.500 9.100 H6.500" stroke="#6f747d" stroke-width="1"/>
</svg>
<!-- grid view icon -->
<svg style="left:221px;top:462px" width="16" height="13" viewBox="0 0 16 13">
<rect x="0.500" y="0.500" width="15" height="11.500" fill="#fff" stroke="#9aa3b3"/>
<rect x="1" y="1" width="14" height="2.500" fill="#c4cfe3"/>
<path d="M1 5.500 H15 M1 7.800 H15 M1 10 H15" stroke="#b7c2d8" stroke-width="0.900"/>
</svg>
<!-- clip doc icon -->
<svg style="left:257px;top:460px" width="15" height="16" viewBox="0 0 15 16">
<path d="M1.500 3.500 H10.500 L13.500 6.500 V15.500 H1.500 Z" fill="#fdfdfd" stroke="#8b8f96"/>
<path d="M10.500 3.500 V6.500 H13.500" fill="#eceef1" stroke="#8b8f96"/>
<path d="M4.500 8 V2.500 Q4.500 0.700 6.500 0.700 Q8.500 0.700 8.500 2.500 V8.500 H6.500 V3" stroke="#4a4a4a" stroke-width="1" fill="none"/>
</svg>
<!-- right bell (cut) -->
<svg style="left:975px;top:464px" width="8" height="10" viewBox="0 0 8 10"><path d="M3 0 C1.500 3 2 6 0 8 H8 V0 Z" fill="#f2a81d"/><rect x="0" y="8" width="8" height="1.500" fill="#d88c0c"/></svg>
<!-- scroll arrows + grip -->
<svg style="left:38px;top:405px" width="6" height="9" viewBox="0 0 6 9"><path d="M5 0.500 V8 L0.500 4.250 Z" fill="#3c3c3c"/></svg>
<svg style="left:953px;top:405px" width="6" height="9" viewBox="0 0 6 9"><path d="M0.500 0.500 V8 L5 4.250 Z" fill="#3c3c3c"/></svg>
<svg style="left:150px;top:406px" width="8" height="7" viewBox="0 0 8 7"><path d="M1.500 0 V6 M4 0 V6 M6.500 0 V6" stroke="#4a4a4a" stroke-width="1"/></svg>
<!-- >> button & dropdown -->
<div style="left:891px;top:232px;width:14px;height:19px;background:#fff;border:1px solid #56627a;border-radius:1px"></div>
<svg style="left:895px;top:237px" width="7" height="6" viewBox="0 0 9 7"><path d="M0.700 0.700 L3.500 3.500 L0.700 6.300 M4.700 0.700 L7.500 3.500 L4.700 6.300" stroke="#111" stroke-width="1.300" fill="none"/></svg>
<div style="left:907px;top:232px;width:1px;height:23px;background:#c9d4e3"></div>
<div style="left:915px;top:232px;width:31px;height:22px;background:#fff;border:1px solid #d3dbe6;border-radius:3px"></div>
<svg style="left:935px;top:241px" width="7" height="4" viewBox="0 0 7 4"><path d="M0.500 0 H6 L3.250 3.300 Z" fill="#4a78b8"/></svg>
<div style="left:407px;top:232px;width:1px;height:23px;background:#b4bfce"></div>
<!-- splitter grip right -->
<svg style="left:976px;top:291px" width="4" height="18" viewBox="0 0 4 18"><path d="M0 1.500 H4 M0 5.900 H4 M0 10.300 H4 M0 14.700 H4" stroke="#9aa7b8" stroke-width="1.600"/></svg>
<!-- small marks near Line details right -->
<div style="left:952px;top:433px;width:1px;height:12px;background:linear-gradient(rgba(120,120,120,.2),#8a8a8a 50%,rgba(120,120,120,.2))"></div>
<div style="left:963px;top:433px;width:1px;height:12px;background:linear-gradient(rgba(120,120,120,.2),#8a8a8a 50%,rgba(120,120,120,.2))"></div>

<!-- text labels -->
<div class="t" id="t0" style="left:28.70px;top:13px;color:#000;letter-spacing:-0.271px;">Sales order (1 - usmf) - Sales order: 000855, Whale Wholesales</div>
<div class="t" id="t1" style="left:21.61px;top:37px;color:#fff;letter-spacing:-0.239px;">File</div>
<div class="t" id="t2" style="left:90.50px;top:37px;color:#17174a;letter-spacing:-0.389px;">Sales order</div>
<div class="t" id="t3" style="left:176.20px;top:37px;color:#17174a;letter-spacing:0.018px;">Sell</div>
<div class="t" id="t4" style="left:223.11px;top:37px;color:#17174a;letter-spacing:0.257px;">Manage</div>
<div class="t" id="t5" style="left:295.11px;top:37px;color:#17174a;letter-spacing:-0.009px;">Pick and pack</div>
<div class="t" id="t6" style="left:396.57px;top:37px;color:#17174a;letter-spacing:0.415px;">Invoice</div>
<div class="t" id="t7" style="left:464.11px;top:37px;color:#17174a;letter-spacing:0.057px;">Retail</div>
<div class="t" id="t8" style="left:522.34px;top:37px;color:#17174a;letter-spacing:-0.157px;">General</div>
<div class="t" id="t9" style="left:591.72px;top:37px;color:#17174a;letter-spacing:-0.026px;">Warehouse management</div>
<div class="t" id="t10" style="left:753.67px;top:37px;color:#17174a;letter-spacing:0.106px;">Transportation management</div>
<div class="t" id="t11" style="left:17.20px;top:97px;color:#17174a;letter-spacing:-0.693px;">Sales</div>
<div class="t" id="t12" style="left:16.92px;top:112px;color:#17174a;letter-spacing:0.030px;">order</div>
<div class="t" id="t13" style="left:72.50px;top:62px;color:#17174a;letter-spacing:-0.199px;">Service order</div>
<div class="t" id="t14" style="left:72.41px;top:84px;color:#b4b4b4;letter-spacing:-0.167px;">Purchase order</div>
<div class="t" id="t15" style="left:72.41px;top:106px;color:#b4b4b4;letter-spacing:-0.025px;">Direct delivery</div>
<div class="t" id="t16" style="left:70.41px;top:130px;color:#17174a;letter-spacing:0.378px;">New</div>
<div class="t" id="t17" style="left:174.11px;top:97px;color:#17174a;letter-spacing:0.204px;">Edit</div>
<div class="t" id="t18" style="left:227.71px;top:62px;color:#17174a;letter-spacing:-0.132px;">Delete</div>
<div class="t" id="t19" style="left:227.94px;top:84px;color:#b4b4b4;letter-spacing:-0.294px;">Cancel</div>
<div class="t" id="t20" style="left:195.31px;top:130px;color:#17174a;letter-spacing:0.345px;">Maintain</div>
<div class="t" id="t21" style="left:288.71px;top:97px;color:#b4b4b4;letter-spacing:-0.064px;">Payments</div>
<div class="t" id="t22" style="left:288.71px;top:130px;color:#17174a;letter-spacing:-0.064px;">Payments</div>
<div class="t" id="t23" style="left:359.11px;top:97px;color:#17174a;letter-spacing:-0.060px;">Header</div>
<div class="t" id="t24" style="left:366.98px;top:112px;color:#17174a;letter-spacing:-0.136px;">view</div>
<div class="t" id="t25" style="left:413.41px;top:97px;color:#17174a;letter-spacing:0.113px;">Line</div>
<div class="t" id="t26" style="left:413.18px;top:112px;color:#17174a;letter-spacing:-0.136px;">view</div>
<div class="t" id="t27" style="left:384.20px;top:130px;color:#17174a;letter-spacing:-0.143px;">Show</div>
<div class="t" id="t28" style="left:475.61px;top:62px;color:#17174a;letter-spacing:-0.006px;">From all</div>
<div class="t" id="t29" style="left:475.61px;top:84px;color:#17174a;letter-spacing:0.060px;">From journal</div>
<div class="t" id="t30" style="left:485.74px;top:130px;color:#17174a;letter-spacing:0.173px;">Copy</div>
<div class="t" id="t31" style="left:561.07px;top:97px;color:#17174a;letter-spacing:0.158px;">Totals</div>
<div class="t" id="t32" style="left:621.19px;top:62px;color:#17174a;letter-spacing:-0.202px;">Order events</div>
<div class="t" id="t33" style="left:620.91px;top:84px;color:#17174a;letter-spacing:-0.149px;">Detailed status</div>
<div class="t" id="t34" style="left:615.87px;top:130px;color:#17174a;letter-spacing:-0.201px;">View</div>
<div class="t" id="t35" style="left:731.79px;top:62px;color:#b4b4b4;letter-spacing:-0.016px;">Order credit</div>
<div class="t" id="t36" style="left:731.60px;top:84px;color:#b4b4b4;letter-spacing:-0.323px;">Sales order recap</div>
<div class="t" id="t37" style="left:731.79px;top:106px;color:#b4b4b4;letter-spacing:-0.035px;">Order holds</div>
<div class="t" id="t38" style="left:740.11px;top:130px;color:#17174a;letter-spacing:0.164px;">Functions</div>
<div class="t" id="t39" style="left:837.84px;top:97px;color:#17174a;letter-spacing:-0.080px;">Generate from</div>
<div class="t" id="t40" style="left:847.60px;top:112px;color:#17174a;letter-spacing:0.280px;">template</div>
<div class="t" id="t41" style="left:941.71px;top:62px;color:#17174a;letter-spacing:0.138px;">Notes</div>
<div class="t" id="t42" style="left:909.98px;top:130px;color:#17174a;letter-spacing:0.097px;">Attachments</div>
<div class="t" id="t43" style="left:15.07px;top:158px;color:#1c8c1c;font-size:14.67px;line-height:14.67px;letter-spacing:-0.095px;">000855 : <span class="sel">US-016</span> - Whale Wholesales</div>
<div class="t" id="t44" style="left:30.76px;top:185px;color:#1a1a1a;font-size:13.33px;line-height:13.33px;font-weight:bold;letter-spacing:-0.324px;">Sales order header</div>
<div class="t" id="t45" style="left:30.76px;top:210px;color:#1a1a1a;font-size:13.33px;line-height:13.33px;font-weight:bold;letter-spacing:-0.340px;">Sales order lines</div>
<div class="t" id="t46" style="left:30.77px;top:433px;color:#1a1a1a;font-size:13.33px;line-height:13.33px;font-weight:bold;letter-spacing:-0.161px;">Line details</div>
<div class="t" id="t47" style="left:893.77px;top:157px;color:#111;letter-spacing:0.260px;">Invoiced</div>
<div class="t" id="t48" style="left:64.68px;top:237px;color:#17174a;letter-spacing:0.139px;">Add line</div>
<div class="t" id="t49" style="left:148.93px;top:237px;color:#17174a;letter-spacing:-0.020px;">Add lines</div>
<div class="t" id="t50" style="left:237.93px;top:237px;color:#17174a;letter-spacing:0.111px;">Add products</div>
<div class="t" id="t51" style="left:349.61px;top:237px;color:#17174a;letter-spacing:-0.172px;">Remove</div>
<div class="t" id="t52" style="left:440.45px;top:237px;color:#17174a;letter-spacing:-0.270px;">Sales order line</div>
<div class="t" id="t53" style="left:567.86px;top:237px;color:#17174a;letter-spacing:-0.215px;">Financials</div>
<div class="t" id="t54" style="left:667.07px;top:237px;color:#17174a;letter-spacing:0.152px;">Inventory</div>
<div class="t" id="t55" style="left:765.61px;top:237px;color:#17174a;letter-spacing:0.045px;">Product and supply</div>
<div class="t" id="t56" style="left:56.42px;top:264px;color:#1a1a1a;letter-spacing:-0.039px;">Type</div>
<div class="t" id="t57" style="left:99.67px;top:264px;color:#1a1a1a;letter-spacing:0.030px;">Variant number</div>
<div class="t" id="t58" style="left:198.57px;top:264px;color:#1a1a1a;letter-spacing:0.325px;">Item number</div>
<div class="t" id="t59" style="left:286.61px;top:264px;color:#1a1a1a;letter-spacing:0.104px;">Product name</div>
<div class="t" id="t60" style="left:386.14px;top:264px;color:#1a1a1a;letter-spacing:0.069px;">Quantity</div>
<div class="t" id="t61" style="left:443.65px;top:264px;color:#1a1a1a;letter-spacing:0.274px;">Unit</div>
<div class="t" id="t62" style="left:482.95px;top:264px;color:#1a1a1a;letter-spacing:-0.232px;">Site</div>
<div class="t" id="t63" style="left:520.97px;top:264px;color:#1a1a1a;letter-spacing:-0.239px;">Warehouse</div>
<div class="t" id="t64" style="left:603.40px;top:264px;color:#1a1a1a;letter-spacing:0.095px;">Unit price</div>
<div class="t" id="t65" style="left:672.36px;top:264px;color:#1a1a1a;letter-spacing:0.222px;">Net amount</div>
<div class="t" id="t66" style="left:748.20px;top:264px;color:#1a1a1a;letter-spacing:-0.336px;">Sales category</div>
<div class="t" id="t67" style="left:847.59px;top:264px;color:#1a1a1a;letter-spacing:-0.044px;">CW deliver now</div>
<div class="t" id="t68" style="left:942.84px;top:264px;color:#1a1a1a;letter-spacing:-0.900px;">CW</div>
<div class="t" id="t69" style="left:200.17px;top:286px;color:#1f63c7;letter-spacing:0.175px;">Two</div>
<div class="t" id="t70" style="left:287.92px;top:286px;color:#111;letter-spacing:-0.075px;">Two</div>
<div class="t" id="t71" style="left:409.65px;top:286px;color:#111;letter-spacing:-0.513px;">1.00</div>
<div class="t" id="t72" style="left:443.92px;top:286px;color:#1f63c7;letter-spacing:-0.900px;">ea</div>
<div class="t" id="t73" style="left:482.90px;top:286px;color:#1f63c7;">1</div>
<div class="t" id="t74" style="left:520.40px;top:286px;color:#1f63c7;letter-spacing:-0.488px;">11</div>
<div class="t" id="t75" style="left:611.65px;top:286px;color:#111;letter-spacing:-0.492px;">1,200.00</div>
<div class="t" id="t76" style="left:693.65px;top:286px;color:#111;letter-spacing:-0.492px;">1,200.00</div>
<div class="t" id="t77" style="left:287.82px;top:463px;color:#333;letter-spacing:0.118px;">Item number in order line</div>
</div>
</body></html>
